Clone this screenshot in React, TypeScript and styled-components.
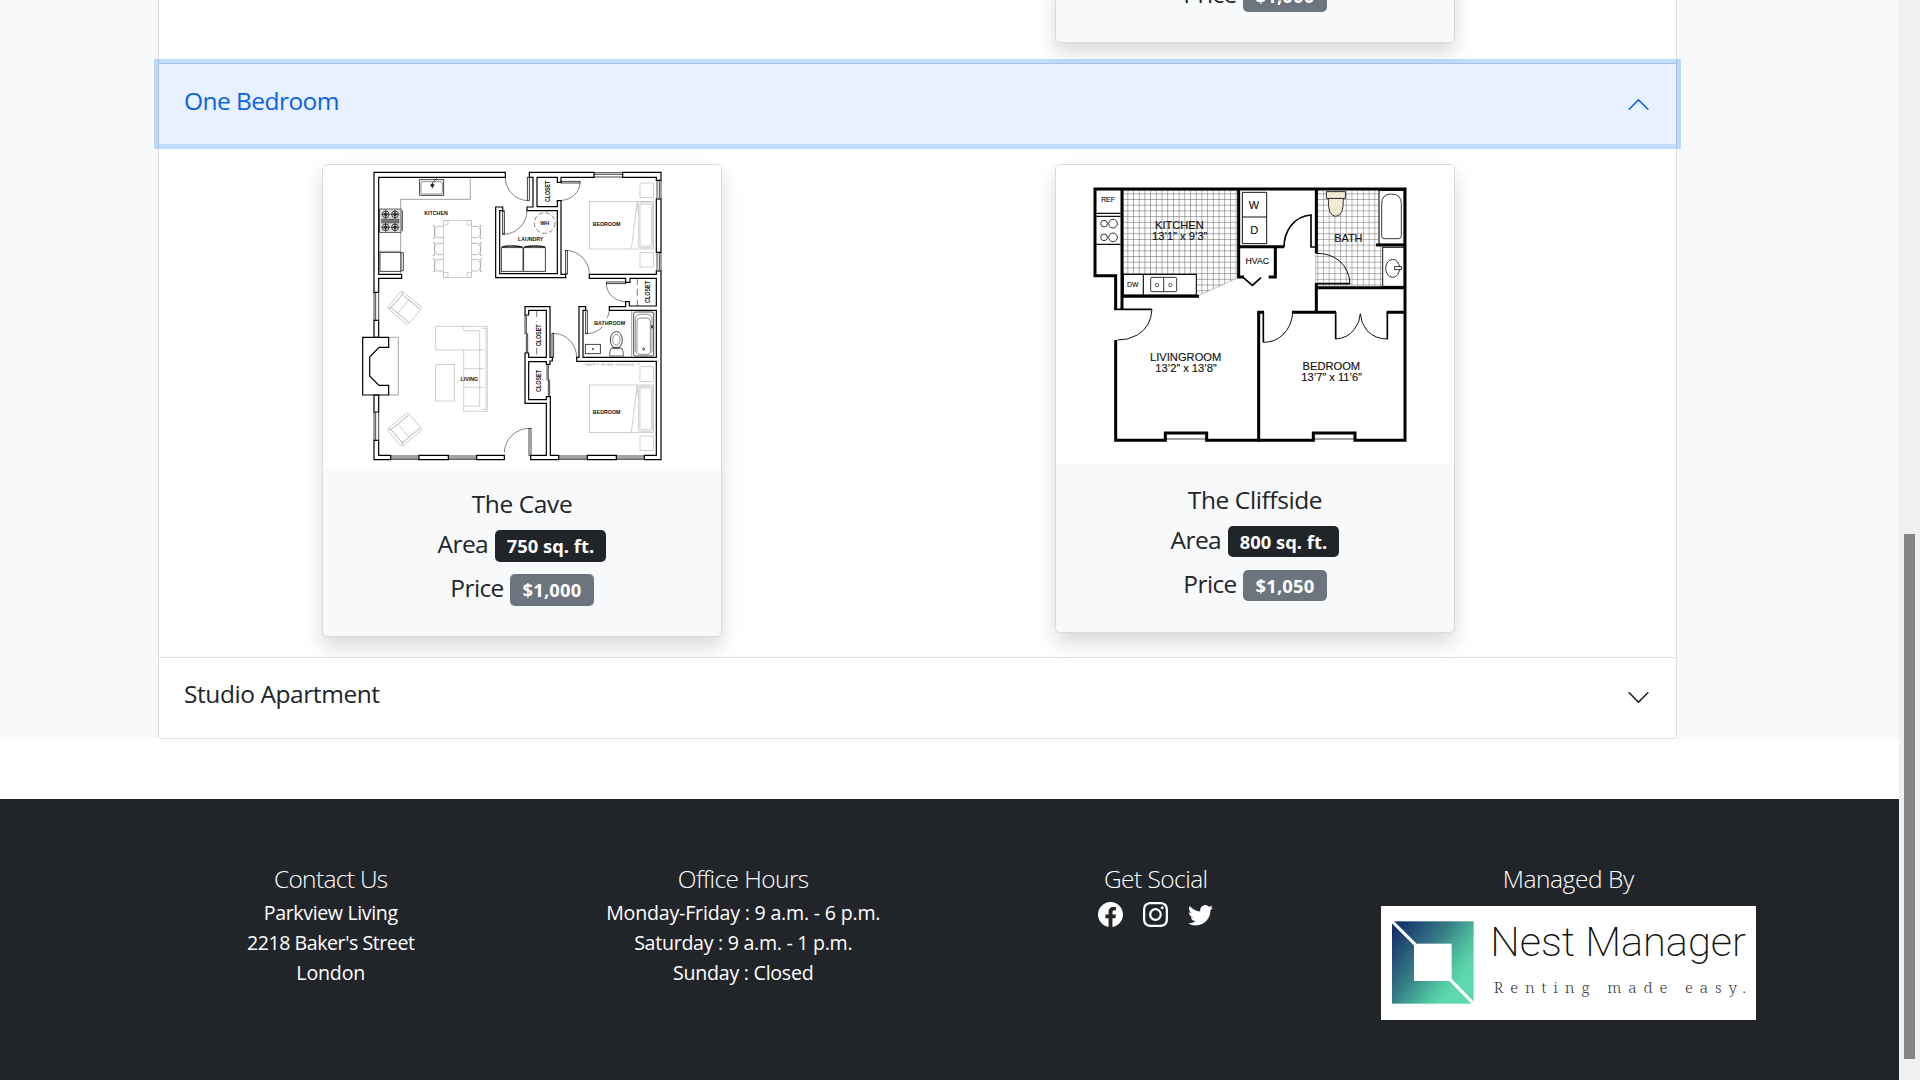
import React from 'react';
import styled, { createGlobalStyle, css } from 'styled-components';
import { BsFacebook, BsInstagram, BsTwitter } from 'react-icons/bs';

const GlobalStyle = createGlobalStyle`
  *, *::before, *::after { box-sizing: border-box; }
  html, body { margin: 0; height: 100%; overflow: hidden; }
  body {
    background: #fff;
    color: #212529;
    font-family: "Open Sans", "Noto Sans", sans-serif;
    font-size: 19.6px;
  }
  h2, h5, p { margin: 0; font-weight: 400; }
`;

/* ---------- page frame ---------- */

const Viewport = styled.div`
  display: flex;
  height: 1080px;
  overflow: hidden;
`;

const Page = styled.div`
  display: flex;
  flex-direction: column;
  width: 1899px;
  height: 1080px;
`;

const ScrollTrack = styled.div`
  flex: none;
  width: 21px;
  padding: 534px 5px 21px;
  background: #f0f0f0;
`;

const ScrollThumb = styled.div`
  height: 100%;
  background: #858585;
`;

/* ---------- accordion ---------- */

const Plans = styled.main`
  flex: none;
  height: 739px;
  padding: 0 222px 0 158px;
  background: #f8f9fa;
`;

const Accordion = styled.div`
  height: 739px;
  border: 1px solid #dfdfdf;
  border-top: 0;
  border-radius: 0 0 5px 5px;
  background: #fff;
`;

const Item = styled.section<{ $divided?: boolean }>`
  border-bottom: ${(p) => (p.$divided ? '1px solid #dfdfdf' : '0')};
`;

const ItemButton = styled.button<{ $open?: boolean }>`
  display: flex;
  align-items: center;
  justify-content: space-between;
  width: 100%;
  height: ${(p) => (p.$open ? 80 : 79)}px;
  padding: 0 25px;
  border: 0;
  border-radius: 0 0 4px 4px;
  background: #fff;
  color: #212529;
  font-family: inherit;
  text-align: left;
  ${(p) =>
    p.$open &&
    css`
      position: relative;
      z-index: 3;
      border-radius: 0;
      background: #e7f1ff;
      color: #0c63e4;
      box-shadow: 0 0 0 5px rgba(13, 110, 253, 0.25);
    `}
`;

const ItemTitle = styled.h2<{ $tracking: number }>`
  margin-bottom: 7px;
  font-size: 24.5px;
  line-height: 30px;
  letter-spacing: ${(p) => p.$tracking}px;
`;

const Chevron = styled.svg<{ $up?: boolean }>`
  width: 25px;
  height: 25px;
  fill: currentColor;
  transform: ${(p) => (p.$up ? 'rotate(180deg)' : 'none')};
`;

const ItemBody = styled.div<{ $collapsedTo?: number }>`
  display: flex;
  justify-content: space-between;
  align-items: flex-start;
  padding: 20px 221px 20px 163px;
  ${(p) =>
    p.$collapsedTo &&
    css`
      height: ${p.$collapsedTo}px;
      align-items: flex-end;
      justify-content: flex-end;
      padding-top: 0;
    `}
`;

/* ---------- apartment card ---------- */

const Card = styled.article`
  width: 400px;
  border: 1px solid #d9dadb;
  border-radius: 5px;
  background: #f8f9fa;
  box-shadow: 0 10px 20px rgba(0, 0, 0, 0.15);
`;

const Plan = styled.svg<{ $height: number }>`
  display: block;
  width: 398px;
  height: ${(p) => p.$height}px;
  border-radius: 4px 4px 0 0;
  background: #fff;
  font-family: "Liberation Sans", Arial, sans-serif;
`;

const CardBody = styled.div`
  display: flex;
  flex-direction: column;
  align-items: center;
  gap: 10px;
  height: 168px;
  padding-top: 20px;
`;

const CardTail = styled(CardBody)`
  height: 64px;
  padding-top: 0;
`;

const CardTitle = styled.h5`
  height: 30px;
  font-size: 24.5px;
  line-height: 32px;
  letter-spacing: -0.4px;
`;

const Fact = styled.p`
  display: flex;
  gap: 6.5px;
  height: 34px;
  font-size: 24.5px;
  line-height: 31.6px;
  letter-spacing: -0.6px;
`;

const Badge = styled.span<{ $tone: 'dark' | 'muted' }>`
  height: 31.6px;
  margin-top: 2px;
  padding: 0 12.2px;
  border-radius: 5px;
  background: ${(p) => (p.$tone === 'dark' ? '#212529' : '#6c757d')};
  color: #fff;
  font-size: 18.4px;
  font-weight: 700;
  line-height: 32px;
  letter-spacing: ${(p) => (p.$tone === 'dark' ? 0 : 0.2)}px;
`;

/* ---------- footer ---------- */

const Footer = styled.footer`
  flex: 1;
  display: grid;
  grid-template-columns: repeat(4, 412.5px);
  justify-content: center;
  margin-top: 60px;
  padding-top: 65px;
  background: #212529;
  color: #fff;
`;

const FooterColumn = styled.div`
  display: flex;
  flex-direction: column;
  align-items: center;
`;

const FooterHeading = styled.h5<{ $tracking: number }>`
  font-size: 24.5px;
  font-weight: 300;
  line-height: 30px;
  margin-bottom: 4px;
  letter-spacing: ${(p) => p.$tracking}px;
`;

const FooterLine = styled.p<{ $tracking: number }>`
  line-height: 30px;
  letter-spacing: ${(p) => p.$tracking}px;
`;

const Social = styled.div`
  display: flex;
  gap: 20px;
  padding-top: 4px;
  font-size: 25px;

  svg { display: block; }
`;

const Logo = styled.svg`
  display: block;
  width: 375px;
  height: 114px;
  margin-top: 8px;
  background: #fff;
`;

const Wordmark = styled.text`
  font: 200 121px Roboto, sans-serif;
  fill: #111;
`;

const Tagline = styled.text`
  font: 300 46px "Noto Serif", "Liberation Serif", serif;
  fill: #333;
`;

/* ---------- drawings ---------- */

type LabelProps = { x: number; y: number; w: number; size: number; bold?: boolean; up?: boolean; children: string };

/* A label centred on x whose baseline is y; `up` turns it to read bottom to top. */
const Label = ({ x, y, w, size, bold, up, children }: LabelProps) => (
  <text
    x={x}
    y={y}
    fontSize={size}
    fontWeight={bold ? 700 : 400}
    textAnchor="middle"
    textLength={w}
    lengthAdjust="spacingAndGlyphs"
    fill="#111"
    stroke={bold ? 'none' : '#111'}
    strokeWidth={bold ? 0 : 0.4}
    transform={up ? `rotate(-90 ${x} ${y})` : undefined}
  >
    {children}
  </text>
);

const Chair = ({ x, y, flip }: { x: number; y: number; flip?: boolean }) => (
  <g transform={`translate(${x} ${y}) scale(${flip ? -1 : 1} 1)`}>
    <path d="M30,-17 H14 Q3,-15 3,0 Q3,15 14,17 H30 M0,-20 L4,-14 V14 L0,20" />
    <path d="M6,-18 L0,-20 M6,18 L0,20" />
  </g>
);

/* Armchair with its backrest on the left before rotation. */
const Armchair = ({ x, y, angle }: { x: number; y: number; angle: number }) => (
  <g transform={`translate(${x} ${y}) rotate(${angle})`}>
    <rect x="-43" y="-32" width="9" height="64" rx="3" />
    <rect x="-38" y="-34" width="74" height="8" rx="3" />
    <rect x="-38" y="26" width="74" height="8" rx="3" />
    <rect x="-34" y="-26" width="72" height="52" />
    <path d="M-8,-26 V26" />
  </g>
);

const Bed = ({ y }: { y: number }) => (
  <g>
    <rect x="838" y={y} width="193" height="143" />
    <path d={`M964,${y + 143} L982,${y} M982,${y} V${y + 30}`} />
    <rect x="986" y={y + 4} width="42" height="135" rx="4" />
    <rect x="990" y={y + 9} width="34" height="125" rx="3" />
    <rect x="990" y={y - 55} width="40" height="44" />
    <rect x="990" y={y + 153} width="40" height="44" />
  </g>
);

const Burner = ({ x, y }: { x: number; y: number }) => (
  <g>
    <circle cx={x} cy={y} r="10" />
    <circle cx={x} cy={y} r="4" fill="#222" />
    <path d={`M${x - 13},${y} H${x + 13} M${x},${y - 13} V${y + 13}`} />
  </g>
);

const CavePlan = () => (
  <Plan viewBox="39 30 1194 909" $height={303}>
    <g fill="none" stroke="#b9b9b9" strokeWidth="2">
      <rect x="401" y="197" width="83" height="170" />
      <rect x="401" y="197" width="13" height="13" />
      <rect x="471" y="197" width="13" height="13" />
      <rect x="401" y="352" width="13" height="15" />
      <rect x="471" y="352" width="13" height="15" />
      {[231, 282, 331].map((y) => (
        <g key={y} stroke="#999">
          <Chair x={370} y={y} />
          <Chair x={515} y={y} flip />
        </g>
      ))}
      <Armchair x={286} y={460} angle={40} />
      <Armchair x={286} y={822} angle={-40} />
      <path d="M377,514 H532 V769 H461 V585 H377 Z M461,514 V527 H509 V753 M461,585 H522 M461,641 H522 M461,697 H522 M461,753 H509 M514,520 H528 V763 H514" />
      <rect x="377" y="629" width="57" height="109" />
      <Bed y={139} />
      <Bed y={690} />
    </g>

    <g fill="none" stroke="#777" strokeWidth="2">
      <path d="M272,358 V133 H481 V67" />
      <path d="M236,547 H265 V720 H236" />
      <path d="M206,289 H272" />
      <path d="M965,466 V606" />
      <path d="M586,67 A70,70 0 0 0 655,137 M651,167 A72,72 0 0 1 582,238 M810,83 A58,55 0 0 1 753,136 M767,286 A72,72 0 0 1 838,357" stroke="#444" />
      <path d="M889,386 A58,55 0 0 0 947,440 M898,466 Q897,478 892,488 M878,515 Q860,534 832,536 M731,535 A70,72 0 0 1 800,607 M583,893 A76,74 0 0 1 657,820" stroke="#444" />
      <path d="M982,370 V453 M680,466 V500 M680,578 V607" strokeDasharray="20 12" stroke="#333" />
      <circle cx="704" cy="204" r="31" strokeDasharray="14 7" stroke="#444" />
    </g>

    <g fill="none" stroke="#222" strokeWidth="2.5">
      <rect x="329" y="74" width="72" height="47" />
      <rect x="333" y="80" width="64" height="37" rx="5" strokeWidth="1.5" />
      <path d="M367,100 V84 L382,68 M362,90 H373" />
      <circle cx="367" cy="91" r="4" fill="#222" />
      <rect x="209" y="162" width="64" height="70" fill="#ddd" strokeWidth="2" />
      <path d="M277,166 V228" />
      <rect x="215" y="192" width="52" height="12" fill="#777" strokeWidth="1" />
      <Burner x={227} y={178} />
      <Burner x={255} y={178} />
      <Burner x={227} y={217} />
      <Burner x={255} y={217} />
      <rect x="210" y="292" width="63" height="57" />
      <path d="M274,293 H280 V347 H274" />
      <rect x="574" y="278" width="65" height="71" />
      <rect x="641" y="278" width="65" height="71" />
      <path d="M576,276 Q606,270 637,276 M643,276 Q674,270 705,276" strokeWidth="4" />
      <rect x="826" y="568" width="45" height="28" />
      <circle cx="849" cy="582" r="2" />
      <ellipse cx="919" cy="555" rx="18" ry="25" />
      <ellipse cx="919" cy="554" rx="11" ry="16" strokeWidth="1.5" />
      <path d="M906,577 H932 M903,580 Q898,590 899,603 H940 Q941,590 936,580 Z" strokeWidth="2" />
      <rect x="971" y="471" width="60" height="132" rx="5" />
      <rect x="976" y="478" width="50" height="120" rx="14" strokeWidth="1.5" />
      <path d="M981,590 V500 Q981,489 992,489 H1011 Q1021,489 1021,500 V590" strokeWidth="1.5" />
      <circle cx="1001" cy="582" r="3" />
      <path d="M1026,511 V520" strokeWidth="5" />
    </g>

    <g fill="none" stroke="#222" strokeWidth="2.5">
      <path d="M192,412 V496 M197,412 V496 M206,412 V496 M192,771 V856 M197,771 V856 M206,771 V856" />
      <path d="M852,53 H938 M852,58 H938 M852,66 H938" />
      <path d="M1041,76 V132 M1048,76 V132 M1053,76 V132 M1041,292 V348 M1048,292 V348 M1053,292 V348" />
      {[242, 415, 746, 919].map((x) => (
        <path key={x} d={`M${x},903 H${x + 85} M${x},909 H${x + 85} M${x},913 H${x + 85}`} />
      ))}
      <rect x="652" y="67" width="6" height="69" />
      <rect x="578" y="167" width="5" height="71" />
      <rect x="753" y="79" width="57" height="5" />
      <rect x="767" y="286" width="5" height="71" />
      <rect x="889" y="381" width="58" height="5" />
      <rect x="827" y="466" width="5" height="70" />
      <rect x="726" y="535" width="5" height="72" />
      <rect x="657" y="820" width="6" height="81" />
      <path d="M645,480 V537 M649,480 V537 M649,535 V594 M653,535 V594 M711,628 V676 M715,628 V676 M715,674 V725 M719,674 V725" />
    </g>

    <g fill="none" stroke="#000" strokeWidth="3.6">
      <path d="M586,52 H192 V412 H206 V370 H275 V358 H206 V67 H586 Z" />
      <path d="M192,496 H206 V547 H192 Z M192,720 H206 V771 H192 Z" />
      <path d="M158,547 H236 V577 H207 L179,606 V663 L207,691 H236 V720 H158 Z" />
      <path d="M192,856 V914 H242 V901 H206 V856 Z M327,901 H415 V914 H327 Z M500,901 H583 V914 H500 Z M832,901 H919 V914 H832 Z" />
      <path d="M658,52 H852 V67 H753 V82 H742 V67 H681 V155 H742 V137 H753 V358 H767 V368 H557 V156 H578 V167 H569 V356 H742 V167 H651 V156 H669 V67 H658 Z" />
      <path d="M938,52 H1053 V76 H1039 V67 H938 Z M1039,132 H1053 V292 H1039 Z" />
      <path d="M662,914 V901 H709 V745 H645 V594 H656 V607 H709 V466 H656 V480 H645 V455 H720 V607 H727 V618 H720 V628 H709 V620 H656 V734 H709 V725 H721 V901 H746 V914 Z" />
      <path d="M1003,914 V901 H1039 V619 H800 V607 H807 V455 H827 V466 H819 V607 H1039 V466 H898 V455 H947 V440 H958 V453 H1039 V370 H960 V382 H947 V370 H838 V358 H1039 V348 H1053 V914 Z" />
    </g>

    <Label x={378} y={180} w={71} size={17} bold>KITCHEN</Label>
    <Label x={662} y={259} w={76} size={17} bold>LAUNDRY</Label>
    <Label x={704} y={211} w={27} size={17} bold>WH</Label>
    <Label x={890} y={214} w={83} size={17} bold>BEDROOM</Label>
    <Label x={890} y={777} w={83} size={17} bold>BEDROOM</Label>
    <Label x={899} y={510} w={93} size={17} bold>BATHROOM</Label>
    <Label x={478} y={677} w={53} size={17} bold>LIVING</Label>
    <Label x={720} y={109} w={64} size={20} bold up>CLOSET</Label>
    <Label x={1020} y={411} w={66} size={20} bold up>CLOSET</Label>
    <Label x={692} y={541} w={66} size={20} bold up>CLOSET</Label>
    <Label x={692} y={678} w={66} size={20} bold up>CLOSET</Label>
    <text x="825" y="634" fontSize="12" textLength="165" fill="#aaa">HAPPY HOME DESIGNS ™</text>
  </Plan>
);

const CliffsidePlan = () => (
  <Plan viewBox="18 30 1194 895.5" $height={298.5}>
    <defs>
      <pattern id="kitchenTiles" x="232" y="115" width="17.1" height="17.1" patternUnits="userSpaceOnUse">
        <path d="M0,1 H17.1 M1,0 V17.1" stroke="#666" strokeWidth="1.9" />
      </pattern>
      <pattern id="bathTiles" x="819" y="115" width="17.1" height="17.1" patternUnits="userSpaceOnUse">
        <path d="M0,1 H17.1 M1,0 V17.1" stroke="#777" strokeWidth="1.9" />
      </pattern>
    </defs>
    <path d="M220,106 H564 V368 L445,422 H220 Z" fill="url(#kitchenTiles)" stroke="#888" strokeWidth="1.5" />
    <path d="M803,106 H985 V270 H997 V394 H797 V106 Z" fill="url(#bathTiles)" />
    <path d="M797,294 V388" stroke="#999" strokeWidth="2" />

    <g fill="#fff" stroke="#111" strokeWidth="3.5">
      <path d="M220,358 H439 V420 H220 Z M280,358 V420" />
      <rect x="302" y="367" width="78" height="43" rx="4" strokeWidth="2.5" />
      <path d="M341,367 V410" strokeWidth="2.5" />
      <circle cx="321" cy="390" r="5" strokeWidth="2" />
      <circle cx="361" cy="390" r="5" strokeWidth="2" />
      <path d="M139,175 H212 M139,184 H212 M139,268 H212" />
      <circle cx="162" cy="206" r="10" strokeWidth="2.5" />
      <circle cx="189" cy="206" r="13" strokeWidth="2.5" />
      <circle cx="162" cy="247" r="10" strokeWidth="2.5" />
      <circle cx="189" cy="247" r="13" strokeWidth="2.5" />
      <path d="M577,112 H650 V266 H577 Z M577,186 H650" strokeWidth="3" />
      <rect x="987" y="106" width="76" height="162" />
      <path d="M995,242 V146 Q995,117 1024,117 Q1054,117 1054,146 V242 Q1054,251 1046,251 H1003 Q995,251 995,242 Z" strokeWidth="2.5" />
      <rect x="998" y="277" width="65" height="117" strokeWidth="3" />
      <ellipse cx="1028" cy="340" rx="21" ry="27" strokeWidth="2.5" />
      <rect x="1034" y="335" width="20" height="9" strokeWidth="2.5" />
      <path d="M835,129 Q833,184 857,184 Q882,184 880,129 Z" fill="#f1ead6" strokeWidth="2.5" />
      <rect x="829" y="110" width="57" height="20" fill="#f1ead6" strokeWidth="2.5" />
    </g>

    <g fill="none" stroke="#111" strokeWidth="3">
      <path d="M306,463 Q303,516 262,540 Q234,556 202,555" />
      <path d="M728,472 Q726,513 698,540 Q674,562 640,562" />
      <path d="M858,552 Q892,550 912,524 Q930,503 931,476 Q932,503 951,527 Q975,552 1012,552" />
      <path d="M900,388 Q899,346 869,318 Q840,294 797,295" />
      <path d="M348,852 H468 M792,852 H914" stroke="#444" />
    </g>

    <g fill="none" stroke="#000" strokeWidth="9">
      <path d="M197,465 V362 H135 V102 H1065 V856 H915 V834 H790 V856 H470 V834 H346 V856 H197 V555" />
      <path d="M216,102 V463" />
      <path d="M216,424 H447" />
      <path d="M566,102 V366 H582 M566,275 H702 M676,275 V366 H656" />
      <path d="M626,860 V472 H642" />
      <path d="M726,472 H858 M799,476 V385 M799,398 H1065 M799,102 V294 M1065,472 H1010 M978,270 H1065" />
    </g>
    <g fill="none" stroke="#000" strokeWidth="5">
      <path d="M193,463 H306 M640,472 V562 M857,472 V553 M1012,472 V553 M797,386 H900" />
      <path d="M799,276 H783 V180 Q746,182 722,213 Q702,240 702,277" />
      <path d="M580,368 L607,391 L633,368" />
    </g>

    <Label x={174} y={141} w={41} size={22}>REF</Label>
    <Label x={388} y={222} w={146} size={34}>KITCHEN</Label>
    <Label x={389} y={256} w={166} size={33}>13’1” x 9’3”</Label>
    <Label x={612} y={163} w={31} size={33}>W</Label>
    <Label x={613} y={237} w={24} size={33}>D</Label>
    <Label x={622} y={328} w={71} size={27}>HVAC</Label>
    <Label x={895} y={262} w={85} size={34}>BATH</Label>
    <Label x={248} y={396} w={34} size={23}>DW</Label>
    <Label x={407} y={619} w={214} size={34}>LIVINGROOM</Label>
    <Label x={408} y={652} w={184} size={33}>13’2” x 13’8”</Label>
    <Label x={844} y={645} w={173} size={34}>BEDROOM</Label>
    <Label x={845} y={678} w={182} size={33}>13’7” x 11’6”</Label>
  </Plan>
);

const NestLogo = () => (
  <Logo viewBox="63 138 1125 342">
    <defs>
      <linearGradient id="nest" gradientUnits="userSpaceOnUse" x1="96" y1="215" x2="300" y2="365">
        <stop offset="0" stopColor="#15306a" />
        <stop offset="0.5" stopColor="#377f86" />
        <stop offset="0.82" stopColor="#50c4a2" />
        <stop offset="1" stopColor="#5ed8ae" />
      </linearGradient>
    </defs>
    <rect x="96" y="184" width="245" height="247" fill="url(#nest)" />
    <rect x="162" y="251" width="113" height="112" fill="#fff" />
    <path d="M94,182 L166,254 M270,358 L343,433" stroke="#fff" strokeWidth="9" />
    <Wordmark x="391" y="287" textLength="767" lengthAdjust="spacingAndGlyphs">Nest Manager</Wordmark>
    <Tagline x="401" y="398" textLength="757">Renting made easy.</Tagline>
  </Logo>
);

const ChevronIcon = ({ up }: { up?: boolean }) => (
  <Chevron viewBox="0 0 16 16" $up={up}>
    <path
      fillRule="evenodd"
      d="M1.646 4.646a.5.5 0 0 1 .708 0L8 10.293l5.646-5.647a.5.5 0 0 1 .708.708l-6 6a.5.5 0 0 1-.708 0l-6-6a.5.5 0 0 1 0-.708z"
    />
  </Chevron>
);

/* ---------- composed parts ---------- */

const PriceFact = ({ price }: { price: string }) => (
  <Fact>
    Price <Badge $tone="muted">{price}</Badge>
  </Fact>
);

type ApartmentProps = { name: string; area: string; price: string; plan: React.ReactNode };

const Apartment = ({ name, area, price, plan }: ApartmentProps) => (
  <Card>
    {plan}
    <CardBody>
      <CardTitle>{name}</CardTitle>
      <Fact>
        Area <Badge $tone="dark">{area}</Badge>
      </Fact>
      <PriceFact price={price} />
    </CardBody>
  </Card>
);

export default function App() {
  return (
    <>
      <GlobalStyle />
      <Viewport>
        <Page>
          <Plans>
            <Accordion>
              <Item $divided>
                <ItemBody $collapsedTo={63}>
                  <Card>
                    <CardTail>
                      <PriceFact price="$1,000" />
                    </CardTail>
                  </Card>
                </ItemBody>
              </Item>
              <Item $divided>
                <ItemButton $open>
                  <ItemTitle $tracking={-0.55}>One Bedroom</ItemTitle>
                  <ChevronIcon up />
                </ItemButton>
                <ItemBody>
                  <Apartment name="The Cave" area="750 sq. ft." price="$1,000" plan={<CavePlan />} />
                  <Apartment name="The Cliffside" area="800 sq. ft." price="$1,050" plan={<CliffsidePlan />} />
                </ItemBody>
              </Item>
              <Item>
                <ItemButton>
                  <ItemTitle $tracking={-0.43}>Studio Apartment</ItemTitle>
                  <ChevronIcon />
                </ItemButton>
              </Item>
            </Accordion>
          </Plans>
          <Footer>
            <FooterColumn>
              <FooterHeading $tracking={-0.67}>Contact Us</FooterHeading>
              <FooterLine $tracking={-0.38}>Parkview Living</FooterLine>
              <FooterLine $tracking={-0.46}>2218 Baker's Street</FooterLine>
              <FooterLine $tracking={-0.16}>London</FooterLine>
            </FooterColumn>
            <FooterColumn>
              <FooterHeading $tracking={-0.58}>Office Hours</FooterHeading>
              <FooterLine $tracking={-0.2}>Monday-Friday : 9 a.m. - 6 p.m.</FooterLine>
              <FooterLine $tracking={-0.28}>Saturday : 9 a.m. - 1 p.m.</FooterLine>
              <FooterLine $tracking={-0.26}>Sunday : Closed</FooterLine>
            </FooterColumn>
            <FooterColumn>
              <FooterHeading $tracking={-0.55}>Get Social</FooterHeading>
              <Social>
                <BsFacebook />
                <BsInstagram />
                <BsTwitter />
              </Social>
            </FooterColumn>
            <FooterColumn>
              <FooterHeading $tracking={-0.43}>Managed By</FooterHeading>
              <NestLogo />
            </FooterColumn>
          </Footer>
        </Page>
        <ScrollTrack>
          <ScrollThumb />
        </ScrollTrack>
      </Viewport>
    </>
  );
}
